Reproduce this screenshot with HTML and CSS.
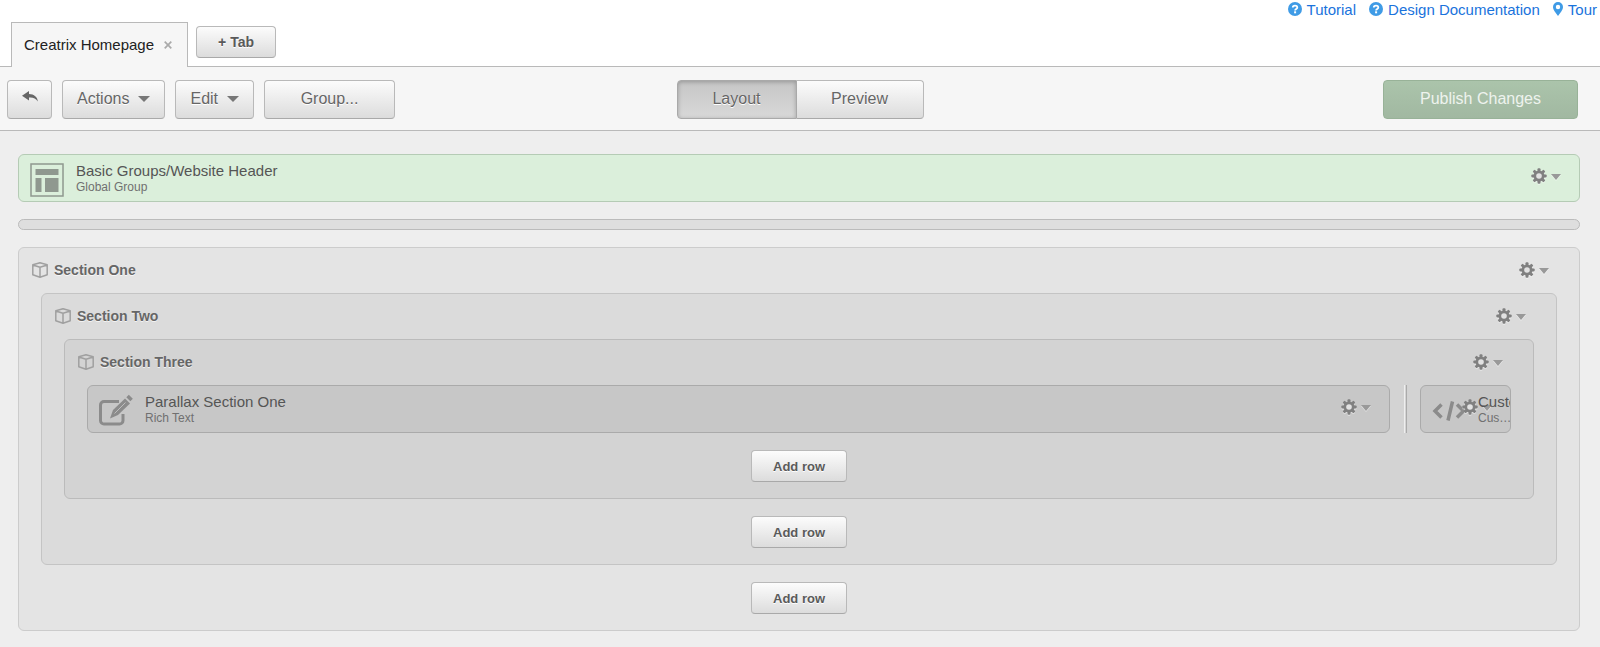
FILE: index.html
```html
<!DOCTYPE html>
<html lang="en">
<head>
  <meta charset="UTF-8">
  <meta name="viewport" content="width=device-width, initial-scale=1.0">
  <title>Creatrix Homepage</title>
  <link rel="stylesheet" href="styles.css">
</head>
<body>
  <svg class="sprite" aria-hidden="true">
    <symbol id="icon-help" viewBox="0 0 14 14">
      <circle cx="7" cy="7" r="7" fill="#3f9be6"/>
      <path d="M4.8 5.5C4.8 2.9 9.3 2.9 9.3 5.4C9.3 7 7.1 6.8 7.1 8.4" fill="none" stroke="#fff" stroke-width="1.8"/>
      <rect x="6.1" y="9.3" width="2" height="2" fill="#fff"/>
    </symbol>
    <symbol id="icon-pin" viewBox="0 0 10 14">
      <path fill="#3f9be6" fill-rule="evenodd" d="M5 0a5 5 0 0 1 5 5c0 2-1 3-1.700 4.500L5 14 1.700 9.500C1 8 0 7 0 5a5 5 0 0 1 5-5zM5 2.800a2.200 2.200 0 1 0 0 4.400 2.200 2.200 0 0 0 0-4.400z"/>
    </symbol>
    <symbol id="icon-gear" viewBox="0 0 16 16">
      <g fill="currentColor">
        <rect id="tooth" x="6.500" y="0.300" width="3" height="15.400" rx="1"/>
        <use href="#tooth" transform="rotate(45 8 8)"/>
        <use href="#tooth" transform="rotate(90 8 8)"/>
        <use href="#tooth" transform="rotate(135 8 8)"/>
        <circle cx="8" cy="8" r="5.500"/>
      </g>
      <circle class="gear-hole" cx="8" cy="8" r="2.800"/>
    </symbol>
    <symbol id="icon-box" viewBox="0 0 16 16">
      <path d="M8 .8L15.200 2.700V12.700L8 15.200.8 12.700V2.700zM.8 3L8 5.200 15.200 3M8 5.200V15" fill="none" stroke="currentColor" stroke-width="1.500" stroke-linejoin="round"/>
    </symbol>
  </svg>

  <header class="top">
    <nav class="help-links">
      <a href="#"><svg class="help-icon"><use href="#icon-help"/></svg>Tutorial</a>
      <a href="#"><svg class="help-icon"><use href="#icon-help"/></svg>Design Documentation</a>
      <a href="#"><svg class="pin-icon"><use href="#icon-pin"/></svg>Tour</a>
    </nav>
    <div class="tabs">
      <div class="tab">
        <span>Creatrix Homepage</span>
        <button class="tab-close" aria-label="Close tab">
          <svg width="8" height="8" viewBox="0 0 8 8"><path d="M.7.7l6.600 6.600M7.300.7L.7 7.300" stroke="#aaa" stroke-width="1.700"/></svg>
        </button>
      </div>
      <button class="btn btn-small add-tab">+ Tab</button>
    </div>
  </header>

  <div class="toolbar">
    <div class="tools">
      <button class="btn btn-back" aria-label="Back">
        <svg width="16" height="11" viewBox="0 0 16 11"><path d="M7 0L0 4.800 7 9.600V6.500c4-.3 7 .8 8.800 4C15.700 6 12 3.200 7 3z" fill="#666"/></svg>
      </button>
      <button class="btn btn-menu">Actions<span class="caret"></span></button>
      <button class="btn btn-menu">Edit<span class="caret"></span></button>
      <button class="btn btn-group">Group...</button>
    </div>
    <div class="switch">
      <button class="btn pressed">Layout</button>
      <button class="btn">Preview</button>
    </div>
    <button class="btn btn-publish">Publish Changes</button>
  </div>

  <main class="canvas">
    <div class="widget global">
      <svg class="widget-icon" viewBox="0 0 34 34">
        <rect x="1" y="1" width="32" height="32" fill="none" stroke="currentColor" stroke-width="1.500"/>
        <path d="M5.500 6h23v6h-23zM5.500 15h6v14h-6zM15 15h13.500v14H15z" fill="currentColor"/>
      </svg>
      <div class="widget-text">
        <div class="widget-title">Basic Groups/Website Header</div>
        <div class="widget-type">Global Group</div>
      </div>
      <button class="gear" aria-label="Options"><svg><use href="#icon-gear"/></svg><span class="caret"></span></button>
    </div>

    <div class="empty-row"></div>

    <section class="section level-one">
      <div class="section-head">
        <svg class="box-icon"><use href="#icon-box"/></svg>
        <h2>Section One</h2>
        <button class="gear" aria-label="Options"><svg><use href="#icon-gear"/></svg><span class="caret"></span></button>
      </div>

      <section class="section level-two">
        <div class="section-head">
          <svg class="box-icon"><use href="#icon-box"/></svg>
          <h2>Section Two</h2>
          <button class="gear" aria-label="Options"><svg><use href="#icon-gear"/></svg><span class="caret"></span></button>
        </div>

        <section class="section level-three">
          <div class="section-head">
            <svg class="box-icon"><use href="#icon-box"/></svg>
            <h2>Section Three</h2>
            <button class="gear" aria-label="Options"><svg><use href="#icon-gear"/></svg><span class="caret"></span></button>
          </div>

          <div class="row">
            <div class="widget wide">
              <svg class="widget-icon" viewBox="0 0 34 34">
                <path d="M20 7.500H5a3.500 3.500 0 0 0-3.500 3.500v15.500A3.500 3.500 0 0 0 5 30h15.500a3.500 3.500 0 0 0 3.500-3.500V20" fill="none" stroke="currentColor" stroke-width="3"/>
                <path d="M9.500 26l3.500-10L26.500 2.500l6.500 6.500L19.500 22.500z" fill="#c7c7c7"/>
                <path d="M11 24.500l3-8.500L26 4.500l5 5L19 21z" fill="currentColor"/>
                <path d="M27.300 3.200L29.800.8l4 4-2.500 2.500z" fill="currentColor"/>
                <path d="M15.500 19.500L26.500 8.500" stroke="#bdbdbd" stroke-width="1"/>
              </svg>
              <div class="widget-text">
                <div class="widget-title">Parallax Section One</div>
                <div class="widget-type">Rich Text</div>
              </div>
              <button class="gear" aria-label="Options"><svg><use href="#icon-gear"/></svg><span class="caret"></span></button>
            </div>
            <div class="divider"></div>
            <div class="widget narrow">
              <svg class="widget-icon" viewBox="0 0 34 34">
                <path d="M9.500 10.500L3 17l6.500 6.500M25 10.500l6.500 6.500-6.500 6.500M20.500 7.500l-4.500 19" fill="none" stroke="currentColor" stroke-width="3.500"/>
              </svg>
              <div class="widget-text">
                <div class="widget-title">Custom HTML</div>
                <div class="widget-type">Custom HTML</div>
              </div>
              <button class="gear" aria-label="Options"><svg><use href="#icon-gear"/></svg><span class="caret"></span></button>
            </div>
          </div>
          <button class="btn btn-small add-row">Add row</button>
        </section>
        <button class="btn btn-small add-row">Add row</button>
      </section>
      <button class="btn btn-small add-row">Add row</button>
    </section>
  </main>
</body>
</html>
```
FILE: styles.css
```css
* {
  box-sizing: border-box;
}

body {
  margin: 0;
  min-height: 100vh;
  background-color: #eee;
  color: #555;
  font-family: "Liberation Sans", Helvetica, Arial, sans-serif;
  font-size: 15px;
}

button {
  font-family: inherit;
  cursor: pointer;
}

svg {
  display: block;
  flex: none;
}

.sprite {
  display: none;
}

/* header */
.top {
  background-color: #fff;
}

.help-links {
  display: flex;
  justify-content: flex-end;
  gap: 13px;
  height: 22px;
  padding-right: 3px;
}

.help-links a {
  display: flex;
  gap: 5px;
  line-height: 19px;
  color: #1a73dc;
  text-decoration: none;
}

.help-icon {
  width: 14px;
  height: 14px;
  margin-top: 2px;
}

.pin-icon {
  width: 10px;
  height: 14px;
  margin-top: 2px;
}

.tabs {
  display: flex;
  gap: 8px;
  height: 44px;
  padding-left: 11px;
}

.tab {
  display: flex;
  align-items: center;
  gap: 10px;
  height: 45px;
  padding: 0 15px 2px 12px;
  border: 1px solid #b9b9b9;
  border-bottom: none;
  background-color: #f6f6f6;
  color: #222;
  position: relative;
}

.tab-close {
  padding: 2px 0 0;
  border: none;
  background: none;
}

/* buttons */
.btn {
  display: flex;
  align-items: center;
  justify-content: center;
  height: 39px;
  padding: 0 14px;
  border: 1px solid #b9b9b9;
  border-bottom-color: #a9a9a9;
  border-radius: 4px;
  background: linear-gradient(#fcfcfc, #dcdcdc);
  color: #666;
  font-size: 16px;
  text-shadow: 0 1px 0 #fff;
}

.btn-small {
  height: 32px;
  padding: 0 21px;
  color: #5a5a5a;
  font-size: 13px;
  font-weight: bold;
}

.add-tab {
  margin-top: 4px;
  font-size: 14px;
}

.caret {
  border: 5px solid transparent;
  border-top: 6px solid #777;
  border-bottom: none;
}

/* toolbar */
.toolbar {
  display: grid;
  grid-template-columns: 1fr auto 1fr;
  align-items: center;
  height: 65px;
  padding: 1px 7px 0;
  border-top: 1px solid #b9b9b9;
  border-bottom: 1px solid #b9b9b9;
  background-color: #f6f6f6;
}

.tools {
  display: flex;
  gap: 10px;
}

.btn-back {
  width: 45px;
  padding: 0 0 5px;
}

.btn-menu {
  gap: 9px;
}

.btn-menu .caret {
  border-width: 6px 6px 0;
}

.btn-group {
  width: 131px;
}

.switch {
  display: flex;
}

.switch .btn {
  width: 127px;
  border-radius: 0 4px 4px 0;
  border-left: none;
}

.switch .pressed {
  width: 120px;
  border: 1px solid #a9a9a9;
  border-radius: 4px 0 0 4px;
  background: linear-gradient(#c6c6c6, #d8d8d8);
  box-shadow: inset 0 1px 4px rgba(0, 0, 0, 0.25);
}

.btn-publish {
  justify-self: end;
  width: 195px;
  margin-right: 15px;
  border-color: #98b298;
  background: linear-gradient(#abc4ab, #a1b8a1);
  color: #eef3ee;
  text-shadow: none;
}

/* canvas */
.canvas {
  display: flex;
  flex-direction: column;
  gap: 17px;
  padding: 23px 20px 16px 18px;
}

.widget {
  display: flex;
  position: relative;
  min-width: 0;
  height: 48px;
  padding-left: 11px;
  border: 1px solid #aaa;
  border-radius: 6px;
  background-color: #c7c7c7;
  overflow: hidden;
}

.global {
  border-color: #b5cbb5;
  background-color: #dbefdb;
}

.widget-icon {
  width: 34px;
  height: 34px;
  margin-top: 8px;
  color: #8b8b8b;
}

.global .widget-icon {
  color: #8f988f;
}

.widget-text {
  position: relative;
  z-index: 1;
  min-width: 0;
  margin-left: 12px;
  padding-top: 7px;
  white-space: nowrap;
}

.widget-title {
  line-height: 18px;
  font-size: 15px;
}

.widget-type {
  overflow: hidden;
  text-overflow: ellipsis;
  line-height: 15px;
  font-size: 12px;
  color: #707070;
}

.gear {
  display: flex;
  align-items: center;
  gap: 4px;
  padding: 0;
  border: none;
  background: none;
  color: #808080;
  filter: drop-shadow(0 1px 0 rgba(255, 255, 255, 0.5));
}

.gear svg {
  width: 16px;
  height: 16px;
}

.gear .caret {
  margin-top: 2px;
  border-top-color: #999;
}

.gear-hole {
  fill: #e2e2e2;
}

/* the menu shares its place with long titles */
.widget .gear {
  position: absolute;
  top: 13px;
  right: 18px;
}

.empty-row {
  height: 11px;
  border: 1px solid #bbb;
  border-radius: 6px;
  background-color: #dedede;
}

.section {
  display: flex;
  flex-direction: column;
  padding: 0 22px 16px;
  border: 1px solid #ccc;
  border-radius: 6px;
  background-color: #e4e4e4;
}

.level-two {
  border-color: #c4c4c4;
  background-color: #dbdbdb;
}

.level-three {
  border-color: #bbb;
  background-color: #d3d3d3;
}

.section-head {
  display: flex;
  align-items: center;
  gap: 6px;
  height: 45px;
  margin: 0 8px 0 -9px;
  padding-bottom: 2px;
}

.section-head h2 {
  flex: 1;
  margin: 0;
  font-size: 14px;
  color: #666;
  text-shadow: 0 1px 0 rgba(255, 255, 255, 0.7);
}

.box-icon {
  width: 16px;
  height: 16px;
  color: #a0a0a0;
}

.row {
  display: flex;
}

.wide {
  flex: 1;
}

.narrow {
  flex: 0 0 91px;
}

.narrow .widget-text {
  margin-right: -2px;
}

.divider {
  width: 3px;
  margin: 0 13px 0 14px;
  border-left: 1px solid #eee;
  border-right: 1px solid #aaa;
}

.add-row {
  align-self: center;
  margin-top: 17px;
}
```
